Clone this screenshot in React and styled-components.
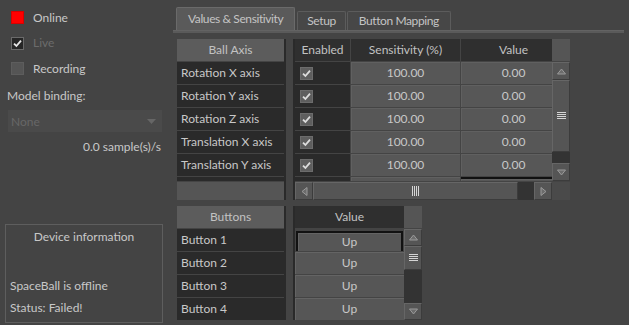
import React from "react";
import styled, { createGlobalStyle } from "styled-components";

const GlobalStyle = createGlobalStyle`
  html, body {
    margin: 0;
    padding: 0;
    background: #444444;
  }
  body {
    color: #c8c8c8;
    font-family: Lato, "Liberation Sans", sans-serif;
    font-size: 12px;
  }
`;

const Screen = styled.div`
  background: #444444;
  display: flex;
  height: 325px;
  overflow: hidden;
  width: 629px;
`;

/* ---------- left panel ---------- */

const LeftPanel = styled.div`
  box-sizing: border-box;
  display: flex;
  flex: none;
  flex-direction: column;
  height: 325px;
  padding-top: 11px;
  width: 173px;
`;

const StatusList = styled.div`
  display: flex;
  flex-direction: column;
  gap: 12.5px;
  padding-left: 11px;
`;

const StatusRow = styled.div`
  align-items: center;
  display: flex;
  gap: 9px;
  height: 13px;
`;

const indicatorColors = {
  on: { bg: "#ff0000", border: "#d80000" },
  checked: { bg: "#262626", border: "#6a6a6a" },
  off: { bg: "#555555", border: "#5d5d5d" },
};

const Indicator = styled.div`
  align-items: center;
  background: ${(p) => indicatorColors[p.$state].bg};
  border: 1px solid ${(p) => indicatorColors[p.$state].border};
  box-sizing: border-box;
  display: flex;
  flex: none;
  height: 13px;
  justify-content: center;
  width: 13px;
`;

const StatusLabel = styled.span`
  color: ${(p) => (p.$disabled ? "#6c6c6c" : "#c8c8c8")};
  line-height: 14px;
`;

const FieldLabel = styled.div`
  line-height: 14px;
  margin: 14px 0 0 7px;
`;

const Combo = styled.div`
  align-items: center;
  background: #4a4a4a;
  box-sizing: border-box;
  color: #676767;
  display: flex;
  height: 22px;
  justify-content: space-between;
  margin: 7px 0 0 8px;
  padding: 0 6px 0 3px;
  width: 154px;
`;

const Rate = styled.div`
  line-height: 14px;
  margin: 8px 12px 0 0;
  text-align: right;
`;

const GroupBox = styled.div`
  border: 1px solid #5e5e5e;
  box-sizing: border-box;
  display: flex;
  flex-direction: column;
  height: 99px;
  margin: auto 0 2px 5px;
  padding: 5px 0 7px 4px;
  width: 158px;
`;

const GroupTitle = styled.div`
  line-height: 14px;
  padding-right: 4px;
  text-align: center;
`;

const InfoLines = styled.div`
  display: flex;
  flex-direction: column;
  gap: 8px;
  line-height: 14px;
  margin-top: auto;
`;

/* ---------- tabs ---------- */

const RightPanel = styled.div`
  display: flex;
  flex: 1;
  flex-direction: column;
  padding-right: 5px;
`;

const TabRow = styled.div`
  align-items: flex-end;
  display: flex;
  height: 30px;
  padding-left: 3px;
`;

const Tab = styled.div`
  background: ${(p) => (p.$active ? "#5a5a5a" : "#474747")};
  border: 1px solid ${(p) => (p.$active ? "#6a6a6a" : "#5c5c5c")};
  border-bottom: none;
  border-radius: 2px 2px 0 0;
  box-sizing: border-box;
  color: #c4c4c4;
  height: ${(p) => (p.$active ? 23 : 19)}px;
  letter-spacing: -0.4px;
  line-height: ${(p) => (p.$active ? 21 : 18)}px;
  margin-left: ${(p) => p.$gap || 0}px;
  padding: 0 ${(p) => p.$pad}px;
  white-space: nowrap;
`;

const TabBar = styled.div`
  background: #5a5a5a;
  border-top: 1px solid #636363;
  height: 2px;
`;

const TabContent = styled.div`
  display: flex;
  flex-direction: column;
  gap: 6px;
  padding: 6px 0 0 4px;
`;

/* ---------- tables ---------- */

const TableBlock = styled.div`
  align-items: stretch;
  display: flex;
`;

const FrozenColumn = styled.div`
  display: flex;
  flex: none;
  flex-direction: column;
  gap: 1px;
  width: 107px;
`;

const Splitter = styled.div`
  border-left: 2px solid #2a2a2a;
  border-right: 2px solid #2a2a2a;
  flex: none;
  width: 7px;
`;

const MainGrid = styled.div`
  display: grid;
  grid-template-columns: ${(p) => p.$viewW}px 18px;
  grid-template-rows: 22px ${(p) => p.$bodyH}px ${(p) => (p.$hscroll ? "18px" : "")};
  row-gap: 1px;
`;

const Row = styled.div`
  display: grid;
  flex: none;
  gap: 1px;
  grid-template-columns: ${(p) => p.$cols};
  height: 22px;
  overflow: hidden;
`;

const Viewport = styled.div`
  display: flex;
  flex-direction: column;
  gap: 1px;
  height: ${(p) => p.$h}px;
  overflow: hidden;
`;

const HeaderCell = styled.div`
  background: ${(p) => (p.$light ? "#5c5c5c" : "#2f2f2f")};
  color: #c2c2c2;
  height: 22px;
  line-height: 22px;
  text-align: center;
  white-space: nowrap;
`;

const NameCell = styled.div`
  background: #2a2a2a;
  flex: none;
  height: 22px;
  line-height: 22px;
  padding-left: 4px;
  white-space: nowrap;
`;

const CheckCell = styled.div`
  align-items: center;
  background: #2a2a2a;
  display: flex;
  padding-left: 5px;
`;

const CellCheck = styled.div`
  align-items: center;
  background: #5e5e5e;
  border: 1px solid #6c6c6c;
  box-sizing: border-box;
  display: flex;
  height: 13px;
  justify-content: center;
  width: 13px;
`;

const ValueCell = styled.div`
  background: #575757;
  border-top: ${(p) => (p.$editing ? "2px solid #111111" : "none")};
  box-shadow: inset 1px 1px 0 #606060;
  line-height: 22px;
  text-align: center;
`;

const ButtonCell = styled.div`
  background: #565656;
  border: ${(p) => (p.$focused ? "2px solid #121212" : "none")};
  box-shadow: inset 1px 1px 0 #646464;
  box-sizing: border-box;
  line-height: ${(p) => (p.$focused ? 18 : 22)}px;
  margin: ${(p) => (p.$focused ? "2px 1px 1px 1px" : "0")};
  text-align: center;
`;

const Placeholder = styled.div`
  background: #555555;
  height: 18px;
`;

const Corner = styled.div`
  background: ${(p) => (p.$dark ? "#4a4a4a" : "#555555")};
`;

/* ---------- scrollbars ---------- */

const VScroll = styled.div`
  display: flex;
  flex-direction: column;
`;

const HScroll = styled.div`
  display: flex;
`;

const ScrollPiece = styled.div`
  align-items: center;
  background: #555555;
  border: 1px solid;
  border-color: #666666 #3c3c3c #3c3c3c #666666;
  box-sizing: border-box;
  display: flex;
  flex: none;
  height: ${(p) => (p.$h ? `${p.$h}px` : "auto")};
  justify-content: center;
  width: ${(p) => (p.$w ? `${p.$w}px` : "auto")};
`;

const ScrollTrack = styled.div`
  background: #333333;
  flex: 1;
`;

const Check = ({ color = "#e6e6e6" }) => (
  <svg width="11" height="11" viewBox="0 0 11 11">
    <path d="M2 5.6 L4.4 8 L9 2.6" fill="none" stroke={color} strokeWidth="1.8" />
  </svg>
);

const Arrow = ({ dir }) => {
  const pts = {
    up: "4.5,1 8.5,6 0.5,6",
    down: "0.5,1 8.5,1 4.5,6",
    left: "6,0.5 6,8.5 1,4.5",
    right: "1,0.5 1,8.5 6,4.5",
  }[dir];
  const vertical = dir === "up" || dir === "down";
  return (
    <svg width={vertical ? 9 : 7} height={vertical ? 7 : 9}>
      <polygon points={pts} fill="#6c6c6c" stroke="#9a9a9a" strokeWidth="1" />
    </svg>
  );
};

const GripH = () => (
  <svg width="9" height="8">
    {[0.5, 2.5, 4.5, 6.5].map((y) => (
      <line key={y} x1="0" x2="9" y1={y} y2={y} stroke="#d4d4d4" strokeWidth="1" />
    ))}
  </svg>
);

const GripV = () => (
  <svg width="8" height="10">
    {[0.5, 2.5, 4.5, 6.5].map((x) => (
      <line key={x} x1={x} x2={x} y1="0" y2="10" stroke="#d4d4d4" strokeWidth="1" />
    ))}
  </svg>
);

const axes = [
  "Rotation X axis",
  "Rotation Y axis",
  "Rotation Z axis",
  "Translation X axis",
  "Translation Y axis",
];

const buttons = ["Button 1", "Button 2", "Button 3", "Button 4"];
const AXIS_COLS = "55px 109px 105px";

export default function App() {
  return (
    <Screen>
      <GlobalStyle />
      <LeftPanel>
        <StatusList>
          <StatusRow>
            <Indicator $state="on" />
            <StatusLabel>Online</StatusLabel>
          </StatusRow>
          <StatusRow>
            <Indicator $state="checked">
              <Check />
            </Indicator>
            <StatusLabel $disabled>Live</StatusLabel>
          </StatusRow>
          <StatusRow>
            <Indicator $state="off" />
            <StatusLabel>Recording</StatusLabel>
          </StatusRow>
        </StatusList>
        <FieldLabel>Model binding:</FieldLabel>
        <Combo>
          <span>None</span>
          <svg width="9" height="5">
            <polygon points="0,0 9,0 4.5,5" fill="#666666" />
          </svg>
        </Combo>
        <Rate>0.0 sample(s)/s</Rate>
        <GroupBox>
          <GroupTitle>Device information</GroupTitle>
          <InfoLines>
            <span>SpaceBall is offline</span>
            <span>Status: Failed!</span>
          </InfoLines>
        </GroupBox>
      </LeftPanel>

      <RightPanel>
        <TabRow>
          <Tab $active $pad={11}>Values &amp; Sensitivity</Tab>
          <Tab $gap={2} $pad={9}>Setup</Tab>
          <Tab $gap={1} $pad={11}>Button Mapping</Tab>
        </TabRow>
        <TabBar />
        <TabContent>
          <TableBlock>
            <FrozenColumn>
              <HeaderCell $light>Ball Axis</HeaderCell>
              <Viewport $h={119}>
                {axes.map((a) => (
                  <NameCell key={a}>{a}</NameCell>
                ))}
                {/* next row, only its top edge scrolls into view */}
                <NameCell />
              </Viewport>
              <Placeholder />
            </FrozenColumn>
            <Splitter />
            <MainGrid $viewW={257} $bodyH={119} $hscroll>
              <Row $cols={AXIS_COLS}>
                <HeaderCell>Enabled</HeaderCell>
                <HeaderCell>Sensitivity (%)</HeaderCell>
                <HeaderCell>Value</HeaderCell>
              </Row>
              <Corner />
              <Viewport $h={119}>
                {axes.map((a) => (
                  <Row key={a} $cols={AXIS_COLS}>
                    <CheckCell>
                      <CellCheck>
                        <Check color="#dcdcdc" />
                      </CellCheck>
                    </CheckCell>
                    <ValueCell>100.00</ValueCell>
                    <ValueCell>0.00</ValueCell>
                  </Row>
                ))}
                <Row $cols={AXIS_COLS}>
                  <CheckCell />
                  <ValueCell />
                  <ValueCell $editing />
                </Row>
              </Viewport>
              <VScroll>
                <ScrollPiece $h={18}>
                  <Arrow dir="up" />
                </ScrollPiece>
                <ScrollPiece $h={72}>
                  <GripH />
                </ScrollPiece>
                <ScrollTrack />
                <ScrollPiece $h={18}>
                  <Arrow dir="down" />
                </ScrollPiece>
              </VScroll>
              <HScroll>
                <ScrollPiece $w={18}>
                  <Arrow dir="left" />
                </ScrollPiece>
                <ScrollPiece $w={205}>
                  <GripV />
                </ScrollPiece>
                <ScrollTrack />
                <ScrollPiece $w={18}>
                  <Arrow dir="right" />
                </ScrollPiece>
              </HScroll>
              <Corner $dark />
            </MainGrid>
          </TableBlock>

          <TableBlock>
            <FrozenColumn>
              <HeaderCell $light>Buttons</HeaderCell>
              <Viewport $h={91}>
                {buttons.map((b) => (
                  <NameCell key={b}>{b}</NameCell>
                ))}
              </Viewport>
            </FrozenColumn>
            <Splitter />
            <MainGrid $viewW={109} $bodyH={91}>
              <Row $cols="109px">
                <HeaderCell>Value</HeaderCell>
              </Row>
              <Corner />
              <Viewport $h={91}>
                {buttons.map((b, i) => (
                  <Row key={b} $cols="109px">
                    <ButtonCell $focused={i === 0}>Up</ButtonCell>
                  </Row>
                ))}
              </Viewport>
              <VScroll>
                <ScrollPiece $h={17}>
                  <Arrow dir="up" />
                </ScrollPiece>
                <ScrollPiece $h={24}>
                  <GripH />
                </ScrollPiece>
                <ScrollTrack />
                <ScrollPiece $h={17}>
                  <Arrow dir="down" />
                </ScrollPiece>
              </VScroll>
            </MainGrid>
          </TableBlock>
        </TabContent>
      </RightPanel>
    </Screen>
  );
}
